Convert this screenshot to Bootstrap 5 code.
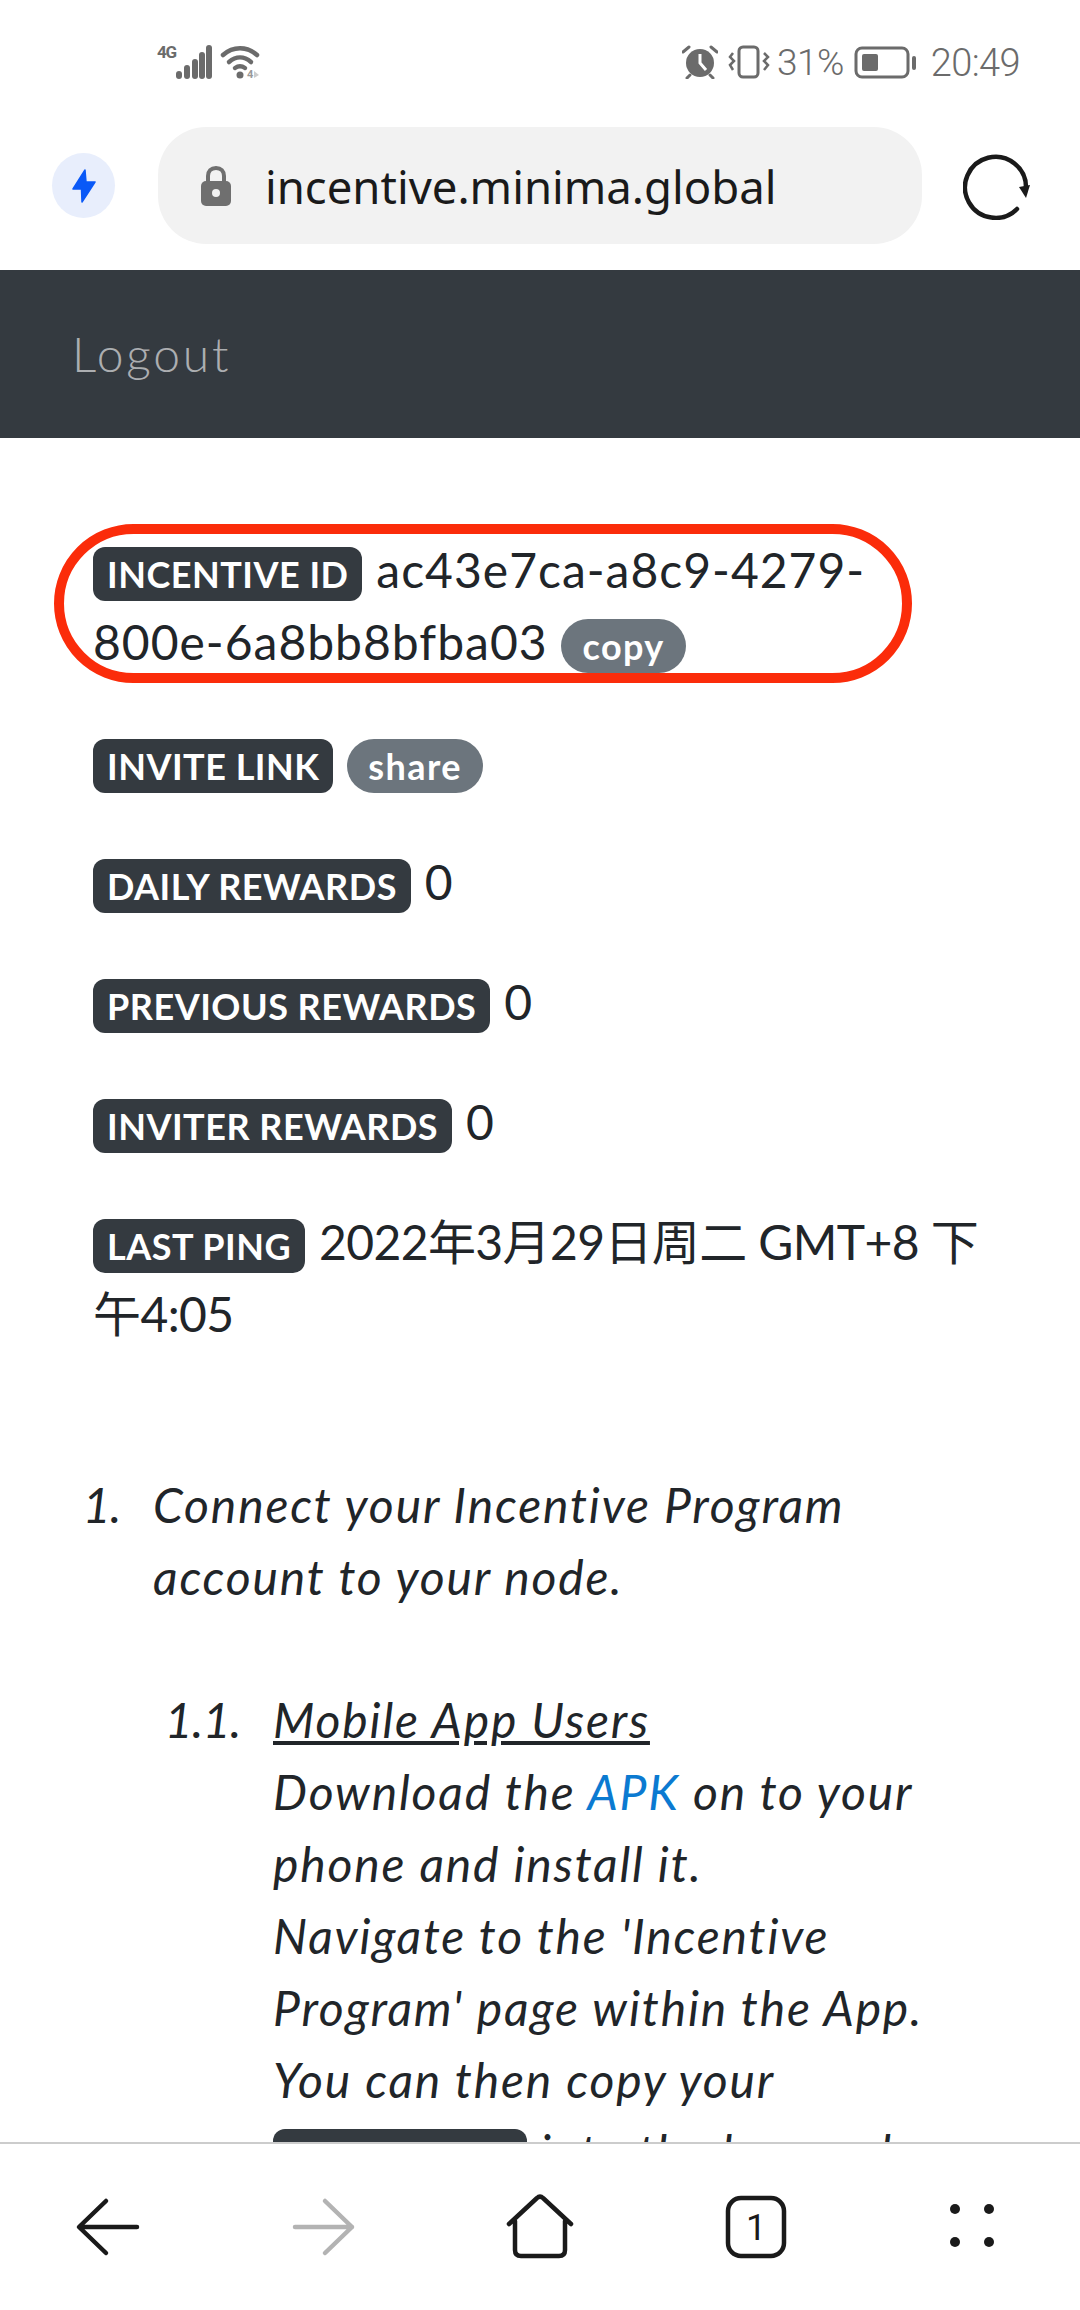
<!DOCTYPE html>
<html lang="en">
<head>
    <meta charset="UTF-8">
    <meta name="viewport" content="width=device-width, initial-scale=1.0">
    <title>Incentive Program</title>
    <link href="https://cdn.jsdelivr.net/npm/bootstrap@5.3.2/dist/css/bootstrap.min.css" rel="stylesheet">
    <style>
        html { font-size: 48px; }
        body {
            font-family: Lato, "Noto Sans CJK SC", sans-serif;
            color: #212529;
            height: 2310px;
            overflow: hidden;
            position: relative;
            background: #fff;
        }
        .status-strip {
            height: 127px;
            padding: 45px 60px 0 157px;
            color: #6b6b6b;
        }
        .status-text { font-family: Roboto, sans-serif; font-weight: 300; font-size: 38px; line-height: 36px; letter-spacing: -.6px; }
        .percent-text { font-size: 37px; }
        .net-label { font-family: Roboto, sans-serif; font-weight: 700; font-size: 17px; line-height: 20px; width: 19px; margin-top: -3px; white-space: nowrap; letter-spacing: -1.2px; }
        .wifi-ico { margin-left: 8px; }
        .gap-alarm { margin-left: 10px; }
        .gap-vib { margin-left: 7px; }
        .gap-batt { margin-left: 10px; }
        .gap-time { margin-left: 15px; }
        .url-strip { height: 143px; padding: 0 50px 26px 52px; }
        .flash-dot {
            width: 63px; height: 65px;
            border-radius: 50%;
            background: #e8eefc;
            margin-right: 43px;
        }
        .url-pill {
            width: 764px; height: 117px;
            border-radius: 48px;
            background: #f2f2f2;
            padding-left: 43px;
            margin-right: 41px;
        }
        .url-text { font-family: "Noto Sans", sans-serif; font-size: 45.5px; color: #1a1a1a; margin-left: 34px; line-height: 1; padding-top: 3px; }
        .top-nav { background: #343a40; height: 168px; }
        .top-nav .nav-link { color: rgba(255,255,255,.6); padding: .5rem; font-weight: 300; letter-spacing: 2.8px; }
        .page-body { padding: 96px 93px 0; letter-spacing: 1.6px; }
        .page-body p { margin-bottom: 48px; }
        .id-box {
            position: absolute;
            left: 54px; top: 524px;
            width: 858px; height: 159px;
            border: 10px solid #fb2c0a;
            border-radius: 80px;
            pointer-events: none;
        }
        .tag {
            display: inline-block;
            font-size: 36px;
            font-weight: 700;
            line-height: 1;
            padding: 9px 14px;
            border-radius: 12px;
            color: #fff;
            background: #343a40;
            white-space: nowrap;
            letter-spacing: .5px;
        }
        .tag-pill { background: #6c757d; padding: 9px 21px; border-radius: 27px; letter-spacing: 1.4px; }
        .id-text { letter-spacing: 1px; }
        .date-text { letter-spacing: -.6px; }
        .steps {
            list-style: none;
            counter-reset: step;
            font-style: italic;
            letter-spacing: 1.85px;
            margin: 119px 0 0 -93px;
            padding-left: 153px;
        }
        .steps .steps { margin: 71px 0 0 0; padding-left: 120px; }
        .steps > li { counter-increment: step; }
        .steps > li::marker { content: counters(step, ".") ".\00a0\00a0\00a0"; letter-spacing: -.5px; }
        .steps a { color: #0b7ad1; text-decoration: none; }
        .bottom-tools {
            position: absolute;
            left: 0; right: 0; top: 2142px; bottom: 0;
            background: #fff;
            border-top: 2px solid #ccc;
        }
        .bottom-tools svg { position: absolute; top: 50px; }
        .ico-back { left: 74px; }
        .ico-fwd { left: 290px; }
        .ico-home { left: 504px; }
        .ico-tab { left: 722px; }
        .ico-more { left: 942px; }
        .tab-num { font-family: Roboto, sans-serif; font-size: 36px; }
        .wifi-sub { font-family: Roboto, sans-serif; font-size: 11px; font-weight: 700; }
    </style>
</head>
<body>
    <div class="status-strip d-flex align-items-start">
        <div class="net-label">4G</div>
        <svg width="36" height="34" viewBox="0 0 36 34" fill="#6b6b6b">
            <rect x="0" y="26" width="6" height="8" rx="3"/>
            <rect x="8" y="20" width="6" height="14" rx="3"/>
            <rect x="16" y="14" width="6" height="20" rx="3"/>
            <rect x="23" y="7" width="6" height="27" rx="3"/>
            <rect x="30" y="0" width="6" height="34" rx="3"/>
        </svg>
        <svg class="wifi-ico" width="44" height="34" viewBox="0 0 44 34" fill="none" stroke="#6b6b6b" stroke-width="4.5" stroke-linecap="round">
            <path d="M3 10C13 1 27 1 37 10"/>
            <path d="M9 17C16 11 24 11 31 17"/>
            <path d="M15 23C18 21 22 21 25 23"/>
            <circle cx="20" cy="30" r="3.5" fill="#6b6b6b" stroke="none"/>
            <text x="27" y="33" class="wifi-sub" fill="#999" stroke="none">4</text>
            <path d="M34 26L39 30L34 33Z" fill="#ccc" stroke="none"/>
        </svg>
        <div class="ms-auto d-flex align-items-start">
            <svg width="36" height="34" viewBox="0 0 36 34">
                <circle cx="18" cy="18" r="14" fill="#6b6b6b"/>
                <path d="M18 9V18L24 25" fill="none" stroke="#fff" stroke-width="3"/>
                <path d="M1 7L7 2M35 7L29 2M8 30L5 33M28 30L31 33" stroke="#6b6b6b" stroke-width="3" stroke-linecap="round"/>
            </svg>
            <svg class="gap-alarm" width="42" height="34" viewBox="0 0 42 34" fill="none" stroke="#6b6b6b" stroke-width="3">
                <rect x="11" y="2" width="19" height="30" rx="4"/>
                <path d="M5 8L2 12L6 16L2 20L5 25M36 8L40 12L36 16L40 20L36 25" stroke-width="2.5"/>
            </svg>
            <span class="status-text percent-text gap-vib">31%</span>
            <svg class="gap-batt" width="62" height="34" viewBox="0 0 62 34" fill="none">
                <rect x="2" y="3" width="52" height="29" rx="6" stroke="#6b6b6b" stroke-width="3"/>
                <rect x="8" y="9" width="16" height="17" rx="2" fill="#6b6b6b"/>
                <rect x="58" y="11" width="4" height="14" rx="2" fill="#6b6b6b"/>
            </svg>
            <span class="status-text gap-time">20:49</span>
        </div>
    </div>

    <div class="url-strip d-flex align-items-center">
        <div class="flash-dot d-flex align-items-center justify-content-center flex-shrink-0">
            <svg width="26" height="36" viewBox="-1 -1 26 36"><path d="M13 1L1 20H9.500L10 33L23 13H14Z" fill="#0a59f7" stroke="#0a59f7" stroke-width="1.500" stroke-linejoin="round"/></svg>
        </div>
        <div class="url-pill d-flex align-items-center flex-shrink-0">
            <svg width="30" height="40" viewBox="0 0 30 40" fill="none">
                <path d="M7 17V10C7 5 10 2 15 2C20 2 23 5 23 10V17" stroke="#6f6f6f" stroke-width="4"/>
                <rect x="0" y="15" width="30" height="25" rx="5" fill="#6f6f6f"/>
                <circle cx="15" cy="27" r="4" fill="#f2f2f2"/>
            </svg>
            <span class="url-text">incentive.minima.global</span>
        </div>
        <svg class="flex-shrink-0" width="68" height="68" viewBox="0 0 68 68" fill="none">
            <path d="M54 57A30.500 30.500 0 1 1 63 36" stroke="#1a1a1a" stroke-width="4.500" stroke-linecap="round"/>
            <path d="M56 35L67 33L63 46Z" fill="#1a1a1a"/>
        </svg>
    </div>

    <nav class="navbar top-nav py-0 px-3 align-items-center">
        <a class="nav-link" href="#">Logout</a>
    </nav>

    <div class="page-body">
        <p><span class="tag">INCENTIVE ID</span> <span class="id-text">ac43e7ca-a8c9-4279-800e-6a8bb8bfba03</span> <span class="tag tag-pill">copy</span></p>
        <p><span class="tag">INVITE LINK</span> <span class="tag tag-pill">share</span></p>
        <p><span class="tag">DAILY REWARDS</span> 0</p>
        <p><span class="tag">PREVIOUS REWARDS</span> 0</p>
        <p><span class="tag">INVITER REWARDS</span> 0</p>
        <p class="mb-0"><span class="tag">LAST PING</span> <span class="date-text">2022年3月29日周二 GMT+8 下午4:05</span></p>

        <ol class="steps">
            <li>Connect your Incentive Program account to your node.
                <ol class="steps">
                    <li><u>Mobile App Users</u><br>
                        Download the <a href="#">APK</a> on to your phone and install it.<br>
                        Navigate to the 'Incentive Program' page within the App.<br>
                        You can then copy your <span class="tag">INCENTIVE ID</span> into the box and
                    </li>
                </ol>
            </li>
        </ol>
    </div>

    <div class="id-box"></div>

    <div class="bottom-tools">
        <svg class="ico-back" width="68" height="66" viewBox="0 0 68 66" fill="none" stroke="#1a1a1a" stroke-width="4.500" stroke-linecap="round" stroke-linejoin="round">
            <path d="M63 33H6M32 7L5 33L32 59"/>
        </svg>
        <svg class="ico-fwd" width="68" height="66" viewBox="0 0 68 66" fill="none" stroke="#b3b3b3" stroke-width="4.500" stroke-linecap="round" stroke-linejoin="round">
            <path d="M5 33H62M35 7L62 33L35 59"/>
        </svg>
        <svg class="ico-home" width="72" height="66" viewBox="0 0 72 66" fill="none" stroke="#1a1a1a" stroke-width="4.500" stroke-linecap="round" stroke-linejoin="round">
            <path d="M5 30L33 4C35 2 37 2 39 4L67 30M11 27V56C11 60 13 62 17 62H55C59 62 61 60 61 56V27"/>
        </svg>
        <svg class="ico-tab" width="68" height="66" viewBox="0 0 68 66" fill="none">
            <rect x="6" y="4" width="56" height="58" rx="13" stroke="#1a1a1a" stroke-width="4.500"/>
            <text x="34" y="46" text-anchor="middle" class="tab-num" fill="#1a1a1a">1</text>
        </svg>
        <svg class="ico-more" width="60" height="66" viewBox="0 0 60 66" fill="#1a1a1a">
            <circle cx="13" cy="15" r="5"/><circle cx="47" cy="15" r="5"/>
            <circle cx="13" cy="48" r="5"/><circle cx="47" cy="48" r="5"/>
        </svg>
    </div>

    <script src="https://cdn.jsdelivr.net/npm/bootstrap@5.3.2/dist/js/bootstrap.bundle.min.js"></script>
</body>
</html>
